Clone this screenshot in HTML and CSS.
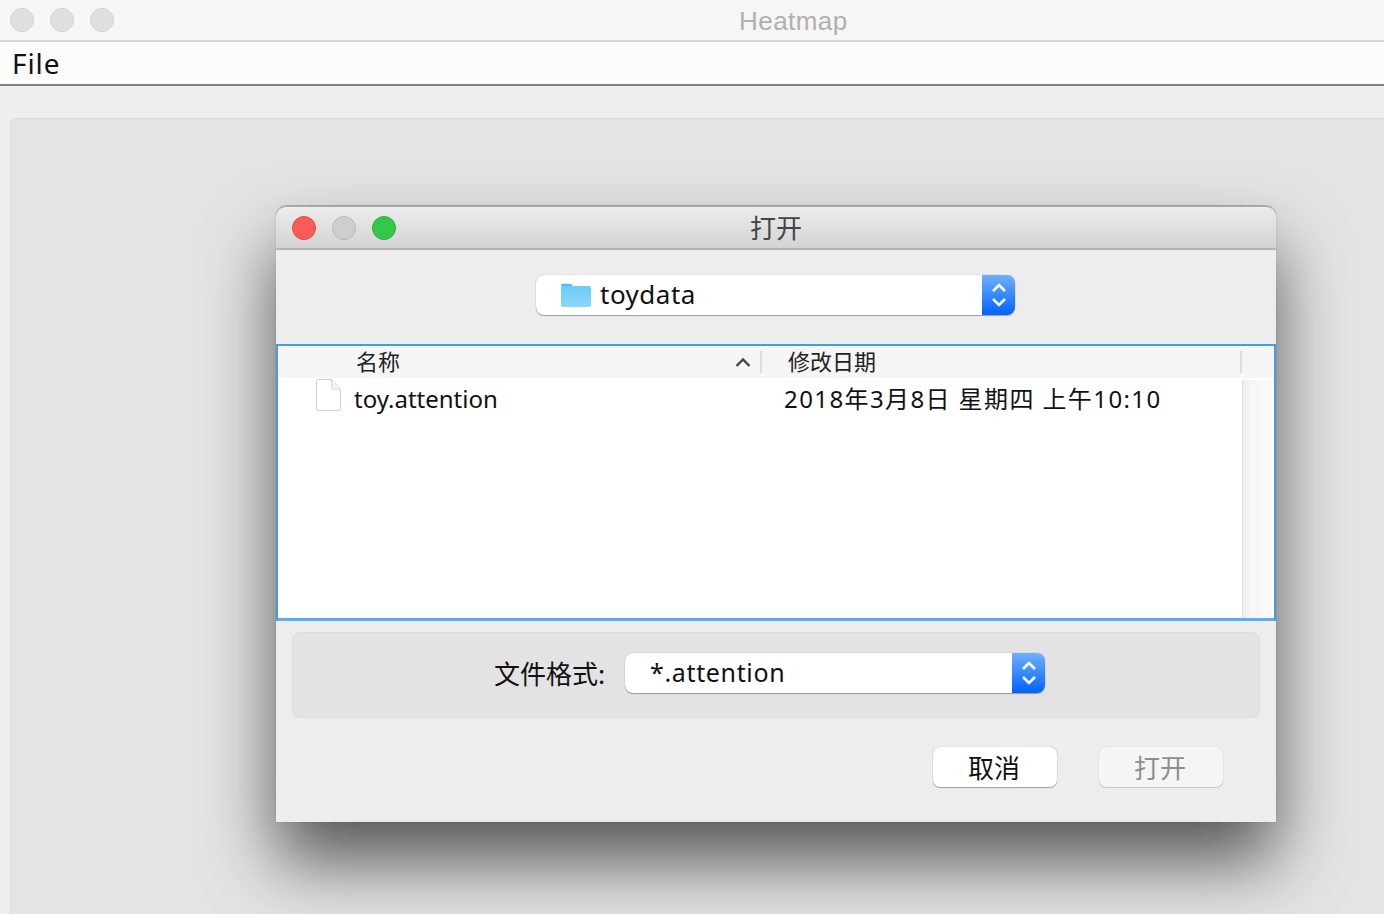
FILE: index.html
```html
<!DOCTYPE html>
<html lang="zh">
<head>
<meta charset="utf-8">
<title>Heatmap</title>
<link rel="stylesheet" href="styles.css">
</head>
<body>
<div class="app">
  <header class="titlebar">
    <div class="lights">
      <span class="light off"></span><span class="light off"></span><span class="light off"></span>
    </div>
    <div class="app-title">Heatmap</div>
  </header>
  <nav class="menubar"><span class="menu-item">File</span></nav>
  <main class="content">
    <div class="panel"></div>
    <section class="dialog">
      <div class="dlg-title">
        <div class="lights dlg-lights">
          <span class="light red"></span><span class="light grey"></span><span class="light green"></span>
        </div>
        <div class="dlg-name">打开</div>
      </div>
      <div class="dlg-top">
        <div class="select folder-select">
          <div class="select-body">
            <svg class="folder" width="30" height="24" viewBox="0 0 30 24"><path d="M0 2.5C0 1.4.8.8 1.6.8h7.6c.9 0 1.3.4 1.9 1.2l1 1.2H0z" fill="#5cbcf2"/><rect x="0" y="3" width="30" height="21" rx="1.5" fill="url(#fg)"/><defs><linearGradient id="fg" x1="0" y1="0" x2="0" y2="1"><stop offset="0" stop-color="#6ccbf8"/><stop offset="1" stop-color="#8cd8fd"/></linearGradient></defs></svg>
            <span class="select-text">toydata</span>
          </div>
          <div class="stepper">
            <svg width="16" height="28" viewBox="0 0 16 28"><path d="M2 10l6-6 6 6M2 18l6 6 6-6" fill="none" stroke="#fff" stroke-width="2.6"/></svg>
          </div>
        </div>
      </div>
      <div class="list">
        <div class="list-head">
          <div class="col-name"><span class="head-label">名称</span>
            <svg class="sort" width="16" height="10" viewBox="0 0 16 10"><path d="M1.5 9L8 2.5 14.500 9" fill="none" stroke="#444" stroke-width="2.4"/></svg>
          </div>
          <div class="col-date"><span class="head-label">修改日期</span></div>
          <div class="col-end"></div>
        </div>
        <div class="list-body">
          <div class="rows">
            <div class="row">
              <svg class="file" width="25" height="32" viewBox="0 0 25 32"><path d="M1.500 .5h14l9 9.500v20a1.500 1.500 0 0 1-1.500 1.500H1.500A1 1 0 0 1 .5 30.500V1.500a1 1 0 0 1 1-1z" fill="#fff" stroke="#d0d0d0"/><path d="M15.500 .5v8a1.500 1.500 0 0 0 1.500 1.500h7.500" fill="#f3f3f3" stroke="#d9d9d9"/></svg>
              <span class="file-name">toy.attention</span>
              <span class="file-date">2018年3月8日 星期四 上午10:10</span>
            </div>
          </div>
          <div class="track"></div>
        </div>
      </div>
      <div class="format-box">
        <span class="format-label">文件格式:</span>
        <div class="select format-select">
          <div class="select-body"><span class="select-text format-text">*.attention</span></div>
          <div class="stepper">
            <svg width="16" height="28" viewBox="0 0 16 28"><path d="M2 10l6-6 6 6M2 18l6 6 6-6" fill="none" stroke="#fff" stroke-width="2.6"/></svg>
          </div>
        </div>
      </div>
      <div class="actions">
        <button class="btn">取消</button>
        <button class="btn disabled">打开</button>
      </div>
    </section>
  </main>
</div>
</body>
</html>
```
FILE: styles.css
```css
* { box-sizing: border-box; }
html, body { margin: 0; height: 100%; overflow: hidden; }
body { font-family: "DejaVu Sans", "Noto Sans CJK SC", sans-serif; color: #111; }
.app { width: 1384px; height: 914px; display: flex; flex-direction: column; background: #eeeeee; }
.titlebar { position: relative; height: 42px; flex: none; background: #f6f6f6; border-bottom: 2px solid #d6d6d6; display: flex; align-items: center; }
.lights { display: flex; gap: 16px; }
.titlebar .lights { padding-left: 10px; }
.light { width: 24px; height: 24px; border-radius: 50%; display: block; }
.light.off { background: #dfdfdf; border: 1px solid #d2d2d2; }
.light.red { background: #fc5b57; border: 1px solid #e2463f; }
.light.grey { background: #cecece; border: 1px solid #b8b8b8; }
.light.green { background: #34c84a; border: 1px solid #2aae3c; }
.app-title { position: absolute; left: 739px; top: 5px; font: 26px/32px "Liberation Sans", sans-serif; letter-spacing: .45px; color: #b0b0b0; }
.menubar { height: 44px; flex: none; background: #fbfbfb; border-bottom: 2px solid #808080; padding-left: 12px; display: flex; align-items: center; }
.menu-item { font: 28px/36px "Noto Sans", sans-serif; color: #111; letter-spacing: .9px; }
.content { position: relative; flex: 1; padding: 32px 0 0 10px; overflow: hidden; }
.panel { height: 100%; background: #e4e4e4; border: 1px solid #dcdcdc; border-right: 0; border-bottom: 0; border-radius: 6px 0 0 0; }
.dialog { position: absolute; left: 276px; top: 120px; width: 1000px; height: 616px; background: #ededed; border-radius: 10px 10px 0 0; box-shadow: 0 40px 70px rgba(0,0,0,.62), 0 -1px 0 rgba(0,0,0,.18), 0 0 1px rgba(0,0,0,.5); display: flex; flex-direction: column; }
.dlg-title { position: relative; height: 44px; flex: none; border-radius: 10px 10px 0 0; background: linear-gradient(#ececec, #d3d3d3); border-top: 1px solid #a9a9a9; border-bottom: 2px solid #b4b4b4; display: flex; align-items: center; justify-content: center; padding-bottom: 2px; }
.dlg-lights { position: absolute; left: 16px; top: 9px; }
.dlg-name { font-size: 26px; line-height: 32px; color: #444; font-family: "Noto Sans CJK SC", sans-serif; }
.dlg-top { height: 94px; flex: none; display: flex; justify-content: center; padding-top: 25px; padding-right: 1px; }
.select { display: flex; height: 40px; border-radius: 8px; background: #fff; box-shadow: 0 1px 1px rgba(0,0,0,.3), 0 0 1px rgba(0,0,0,.35); }
.folder-select { width: 479px; }
.format-select { width: 420px; margin-left: 20px; }
.select-body { flex: 1; display: flex; align-items: center; padding-bottom: 2px; }
.folder-select .select-body { padding-left: 25px; }
.folder { margin: 2px 9px 0 0; }
.select-text { font: 26px/36px "Noto Sans", sans-serif; letter-spacing: .5px; color: #111; }
.format-text { padding-left: 25px; font-size: 25px; letter-spacing: .65px; }
.stepper { width: 33px; flex: none; border-radius: 0 8px 8px 0; background: linear-gradient(#6fb0fb, #0063fb); display: flex; align-items: center; justify-content: center; }
.list { height: 277px; flex: none; border: 2px solid #4a9bdc; border-bottom: 3px solid #5caeef; background: #fff; display: flex; flex-direction: column; }
.list-head { height: 32px; flex: none; background: #f5f5f5; display: flex; align-items: center; font-family: "Noto Sans CJK SC", sans-serif; font-size: 22px; color: #222; }
.col-name { width: 484px; height: 22px; display: flex; align-items: center; justify-content: space-between; padding: 0 9px 0 78px; border-right: 2px solid #dcdcdc; }
.col-date { width: 480px; height: 22px; display: flex; align-items: center; padding-left: 26px; border-right: 2px solid #dcdcdc; }
.col-end { flex: 1; }
.head-label { line-height: 22px; margin-top: -4px; }
.sort { display: block; }
.list-body { flex: 1; display: flex; }
.rows { flex: 1; }
.row { display: flex; align-items: center; height: 40px; padding-left: 38px; padding-top: 2px; font: 24px/32px "Noto Sans", "Noto Sans CJK SC", sans-serif; color: #111; }
.file { flex: none; margin-top: -8px; }
.file-name { width: 430px; margin-left: 13px; }
.file-date { letter-spacing: 1.4px; white-space: nowrap; }
.track { width: 30px; margin-top: 2px; margin-right: 2px; background: linear-gradient(90deg, #ededed, #f7f7f7 30%, #fafafa); border-left: 1px solid #e0e0e0; }
.format-box { margin: 11px 16px 0; height: 86px; flex: none; background: #e3e3e3; border: 1px solid #dcdcdc; border-radius: 8px; display: flex; align-items: center; padding: 0 0 4px 201px; }
.format-label { font: 26px/32px "Noto Sans CJK SC", sans-serif; color: #111; width: 111px; white-space: nowrap; }
.actions { display: flex; justify-content: flex-end; gap: 42px; padding: 29px 53px 0 0; }
.btn { width: 124px; height: 40px; padding: 0 2px 0 0; background: #fff; border: 0; border-radius: 7px; box-shadow: 0 1px 1px rgba(0,0,0,.3), 0 0 1px rgba(0,0,0,.35); font: 26px/32px "Noto Sans CJK SC", sans-serif; color: #111; }
.btn.disabled { background: #f5f5f5; color: #8e8e8e; box-shadow: 0 1px 1px rgba(0,0,0,.15), 0 0 1px rgba(0,0,0,.2); }
```
